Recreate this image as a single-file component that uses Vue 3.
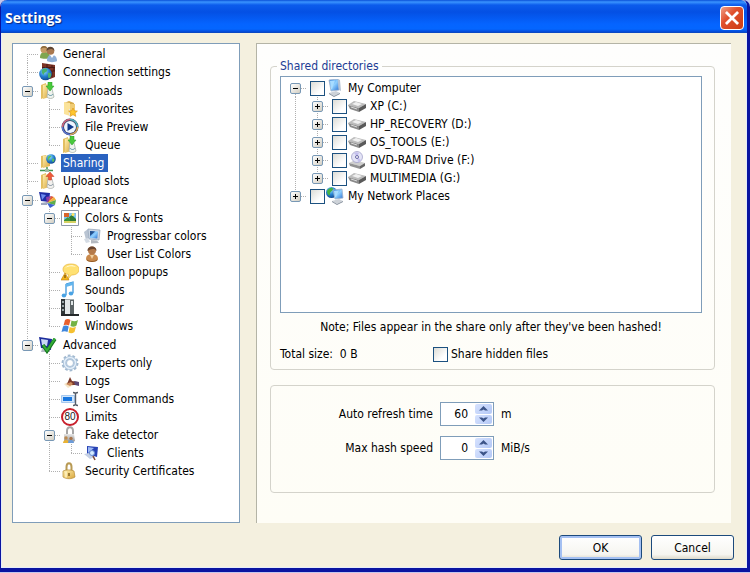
<template>
  <div class="window">
    <svg class="sprite" aria-hidden="true">
      <defs>
        <linearGradient id="gold" x1="0" y1="0" x2="1" y2="1">
          <stop offset="0" stop-color="#fff0b0" />
          <stop offset="1" stop-color="#d9a63c" />
        </linearGradient>
        <linearGradient id="screen" x1="0" y1="0" x2="1" y2="1">
          <stop offset="0" stop-color="#2f7fe0" />
          <stop offset="0.5" stop-color="#8fd0ff" />
          <stop offset="1" stop-color="#2a6fd0" />
        </linearGradient>
        <radialGradient id="globe" cx="0.4" cy="0.3" r="0.8">
          <stop offset="0" stop-color="#8fdcff" />
          <stop offset="0.5" stop-color="#2580d0" />
          <stop offset="1" stop-color="#0b3a80" />
        </radialGradient>
        <linearGradient id="metal" x1="0" y1="0" x2="0" y2="1">
          <stop offset="0" stop-color="#e8e8e8" />
          <stop offset="1" stop-color="#8c8c8c" />
        </linearGradient>
      </defs>

      <symbol id="users" viewBox="0 0 18 18">
        <path d="M1 13c0-5 2-6 5-6s5 2 5 6c-2 1-8 1-10 0z" fill="#7fa650" />
        <circle cx="5" cy="4.500" r="3.500" fill="#c79a63" />
        <path d="M1.500 4C2 0 8 0 8.500 4 6 2 4 3 1.500 4z" fill="#8a6a3c" />
        <path d="M8 16c0-5 2-6 5-6s5 2 5 6c-2 1.500-8 1.500-10 0z" fill="#8fb0d8" />
        <circle cx="11.500" cy="6" r="3.800" fill="#a9784f" />
        <path d="M7.500 6C7 1 15 0 15.500 6 13 3 10 4 7.500 6z" fill="#5d4634" />
        <path d="M11 10l2 3 2-3z" fill="#fff" />
      </symbol>
      <symbol id="connection" viewBox="0 0 18 18">
        <path d="M3 0l13 2v12l-5 2-8-3z" fill="#7c3325" />
        <path d="M3 4.500h13M4 8h12M8 1v3.500M13 2v3M10 5v3M15 5v3M13 8v6" stroke="#4a1a14" />
        <circle cx="6.500" cy="11" r="6.300" fill="url(#globe)" />
        <path d="M3 7c3-3 6-1 5 1s-3 1-3 3-3-1-2-4zM9 10c2-1 4 0 3 3s-3 3-3 0z" fill="#49b26d" />
      </symbol>
      <symbol id="folder-down" viewBox="0 0 18 18">
        <path d="M2 3l5-2v14l-5 2z" fill="#e3bf62" />
        <path d="M4 3l6-1v13l-6 2z" fill="url(#gold)" />
        <path d="M9 6l4 1 2 8c-2 2-5 2-7 0z" fill="#f0f3ee" stroke="#a8b2a8" stroke-width="0.800" />
        <path d="M9 0h4v4h2l-4 5-4-5h2z" fill="#48c93c" stroke="#249a22" stroke-width="0.500" />
        <path d="M9 12c1 2 4 2 5 0" fill="none" stroke="#5d94a4" />
      </symbol>
      <symbol id="folder-up" viewBox="0 0 18 18">
        <path d="M2 3l5-2v14l-5 2z" fill="#e3bf62" />
        <path d="M4 3l6-1v13l-6 2z" fill="url(#gold)" />
        <path d="M9 6l4 1 2 8c-2 2-5 2-7 0z" fill="#f3f1ee" stroke="#aab0ae" stroke-width="0.800" />
        <path d="M9.500 8h3V4.500H15L11 0 7 4.500h2.500z" fill="#ef5a3a" stroke="#c23a22" stroke-width="0.500" />
        <path d="M9 12c1 2 4 2 5 0" fill="none" stroke="#7d8fa0" />
      </symbol>
      <symbol id="favorites" viewBox="0 0 18 18">
        <path d="M3 3l5-2 5 2v11H3z" fill="#d7ab4b" />
        <path d="M3 2l6 1v13l-6-2z" fill="#fbe39a" />
        <path d="M9 4h5v11H9z" fill="#f0cc74" />
        <path d="M8 9h1v6H8z" fill="#e4e7e9" />
        <path d="M12 8l1.300 2.800 3.100.3-2.300 2.100.7 3.200-2.800-1.700-2.800 1.700.7-3.200-2.300-2.100 3.100-.3z" fill="#ffc62e" stroke="#d99012" stroke-width="0.600" />
      </symbol>
      <symbol id="preview" viewBox="0 0 18 18">
        <circle cx="9" cy="9" r="8.500" fill="#343c5e" />
        <path d="M9 1.500A7.500 7.500 0 0 1 16.500 9" fill="none" stroke="#56b4c0" stroke-width="1.500" />
        <path d="M16.500 9A7.500 7.500 0 0 1 9 16.500" fill="none" stroke="#e0ac5a" stroke-width="1.500" />
        <path d="M1.500 9A7.500 7.500 0 0 1 9 1.500" fill="none" stroke="#d06880" stroke-width="1.500" />
        <path d="M9 16.500A7.500 7.500 0 0 1 1.500 9" fill="none" stroke="#5b78d8" stroke-width="1.500" />
        <circle cx="9" cy="9" r="6" fill="#eef5ff" />
        <path d="M6.500 5l6.500 4-6.500 4z" fill="#123a8c" />
      </symbol>
      <symbol id="share" viewBox="0 0 18 18">
        <path d="M2 2l5-1v11l-5 2z" fill="#e3bf62" />
        <path d="M4 2l7-1v11l-7 2z" fill="url(#gold)" />
        <circle cx="12" cy="5" r="4.800" fill="url(#globe)" />
        <path d="M9 3c2-2 4-1 3 0s-2 1-2 3-2-1-1-3zM13 5c2-1 3 0 2 2s-2 1-2-2z" fill="#5cc05d" />
        <path d="M1 16.500h13M8 13v3" stroke="#3f9650" stroke-width="1.500" />
        <path d="M6 15h4v3H6z" fill="#9fb9a2" />
      </symbol>
      <symbol id="appearance" viewBox="0 0 18 18">
        <path d="M0 1l11 1-1 9-8-1z" fill="#1e2ca4" />
        <path d="M2 3l5 1-4 5z" fill="#6d8cf0" />
        <path d="M2 12l6-1v3H2z" fill="#a0a8c0" />
        <path d="M8 12l4-7 3 1z" fill="#e05a34" />
        <path d="M8 12l7-6 2 3z" fill="#f2b23c" />
        <path d="M8 12l9-3-1 5z" fill="#5fae4b" />
        <path d="M8 12l8 2-5 3z" fill="#3c62d2" />
        <path d="M8 12L7 6l5-1z" fill="#8c3ca8" />
      </symbol>
      <symbol id="picture" viewBox="0 0 18 18">
        <path d="M.5 1.500h17v15H.5z" fill="#fff" stroke="#8e98a8" />
        <path d="M3 4h12v10H3z" fill="#7cc2f4" />
        <path d="M3 11l4-3 3 4 5-1v3H3z" fill="#3d9438" />
        <path d="M3 4h5v4H3z" fill="#d8642c" />
        <path d="M8 8l3-2 4 4v2H9z" fill="#2e7a34" />
        <circle cx="12" cy="5.500" r="1.500" fill="#ffe35c" />
        <path d="M3 12h12v2H3z" fill="#d6d264" />
      </symbol>
      <symbol id="monitor" viewBox="0 0 18 18">
        <path d="M1 5l4-3 1 9-3 2z" fill="#b9c4d2" />
        <path d="M5 2l12 1-1 10-10-1z" fill="#cbd6e4" stroke="#8fa0b6" stroke-width="0.700" />
        <path d="M7 4l8 .6-.7 7L7 11z" fill="url(#screen)" />
        <path d="M7 4l5 .4L7 9z" fill="#24508c" />
        <path d="M8 13l6 .5 2 2.500-8 .5z" fill="#b4b9c0" />
        <path d="M1 12l4-1 2 4-4 1z" fill="#d4dbe4" />
      </symbol>
      <symbol id="person" viewBox="0 0 18 18">
        <path d="M3 14c0-4 3-5 6-5s6 1 6 5c0 4-12 4-12 0z" fill="#c98a4c" />
        <path d="M7 10l2 4 2-4z" fill="#f0d0a0" />
        <circle cx="9" cy="5.500" r="4" fill="#b47a4a" />
        <path d="M4.500 6C4 0 14 0 13.500 6 12 3 8 3.500 4.500 6z" fill="#6a4630" />
        <path d="M4 15c3 2 7 2 10 0" fill="none" stroke="#935b26" />
      </symbol>
      <symbol id="balloon" viewBox="0 0 18 18">
        <path d="M10 1c5 0 8 2 8 5.500S15 12 10.500 12L7 16l.500-4.500C4 11 2 9 2 6.500 2 3 5 1 10 1z" fill="#ffe173" stroke="#e7b53e" stroke-width="0.700" />
        <path d="M4 5c2-3 8-4 11-1-3-1-8-1-11 1z" fill="#fffbe0" />
        <path d="M4 10l4 7H0z" fill="#f5b71d" stroke="#bd7c10" stroke-width="0.600" />
        <path d="M4 12v3" stroke="#5b3b05" />
      </symbol>
      <symbol id="note" viewBox="0 0 18 18">
        <path d="M5 3l7-2v11M5 3v11" fill="none" stroke="#3b96dc" stroke-width="1.300" />
        <path d="M5 3l7-2v3L5 6z" fill="#61b5ee" />
        <ellipse cx="3" cy="14.500" rx="2.300" ry="2" fill="#4aa3e4" />
        <ellipse cx="10" cy="12.500" rx="2.300" ry="2" fill="#4aa3e4" />
      </symbol>
      <symbol id="toolbar" viewBox="0 0 18 18">
        <path d="M0 0h13v16H0z" fill="#a3abad" />
        <path d="M0 0h4v16H0z" fill="#303638" />
        <path d="M1 2h2v2H1zM1 6h2v2H1zM1 10h2v2H1z" fill="#9aa6a8" />
        <path d="M4 1h5v14H4z" fill="#e4e9ea" />
        <path d="M9 1h4v14H9z" fill="#5b6365" />
        <path d="M10 2h2v4h-2z" fill="#dfe5e6" />
        <path d="M0 15h18v2H0z" fill="#25292b" />
      </symbol>
      <symbol id="flag" viewBox="0 0 18 18">
        <path d="M4 3c2-1.500 4-1 5.500 0L8 8.500C6 7.500 4 7.500 2.500 8.500z" fill="#e8602c" />
        <path d="M10.500 3.500c2 1 4 1 6.500-.5l-1.500 5.500c-2 1.500-4 1.500-6 .5z" fill="#73b344" />
        <path d="M2 9.500c2-1.500 4-1 5.700 0L6.500 15C4.500 14 2.500 14 .5 15z" fill="#3f86dc" />
        <path d="M8.700 10c2 1 4 1 6.300-.5L13.500 15c-2 1.500-4 1.500-6 .5z" fill="#f5c030" />
      </symbol>
      <symbol id="advanced" viewBox="0 0 18 18">
        <path d="M0 1l13 2-1 11-10-2z" fill="#1c2c9c" />
        <path d="M2 3l7 1-1 6-5-1z" fill="#c9d8f4" />
        <path d="M3 13l8 1v2H2z" fill="#b5bac6" />
        <path d="M4 9l4 6 8-12" fill="none" stroke="#14751c" stroke-width="3.500" />
        <path d="M4 9l4 5.500 8-12" fill="none" stroke="#35ad38" stroke-width="2" />
      </symbol>
      <symbol id="gear" viewBox="0 0 18 18">
        <circle cx="9" cy="9" r="7.500" fill="none" stroke="#a2b9cf" stroke-width="2" stroke-dasharray="2.700 2" />
        <circle cx="9" cy="9" r="5.300" fill="none" stroke="#a9c1da" stroke-width="3.500" />
        <circle cx="9" cy="9" r="5.500" fill="none" stroke="#e3eef8" stroke-width="1.500" />
        <circle cx="9" cy="9" r="3.500" fill="#fff" stroke="#8eabc8" stroke-width="0.700" />
      </symbol>
      <symbol id="log" viewBox="0 0 18 18">
        <path d="M3 12l6-3 4 4-6 3z" fill="#f5e6c8" />
        <path d="M9 5l2 4 6 1v3l-7 0-4-1z" fill="#7c3b2c" />
        <path d="M13 9l5 1v4l-4-1z" fill="#5c4a76" />
        <path d="M5 12l5-2 2 2-3 2z" fill="#cf8c5c" />
      </symbol>
      <symbol id="textfield" viewBox="0 0 18 18">
        <path d="M.5 5.500h13v7H.5z" fill="#cfe5fb" stroke="#a6c8ee" />
        <path d="M2 7h9v4H2z" fill="#1877e0" />
        <path d="M12 2.500c1.500 0 2 .5 2.500 1 .5-.5 1-1 2.500-1M14.500 3.500v11M12 15.500c1.500 0 2-.5 2.500-1 .5.5 1 1 2.500 1" fill="none" stroke="#555d68" stroke-width="1.400" />
      </symbol>
      <symbol id="lock-fake" viewBox="0 0 18 18">
        <path d="M6 9V5c0-5 6-5 6 0v4" fill="none" stroke="#a6a6a6" stroke-width="2" />
        <path d="M3 8h10l1 7c-3 2-8 2-11 1z" fill="url(#metal)" />
        <circle cx="5" cy="12" r="1.700" fill="#be8b50" />
        <path d="M2 17c0-4 6-4 6 0z" fill="#e9b234" />
        <circle cx="10" cy="12.500" r="1.700" fill="#a9744a" />
        <path d="M7 17c0-4 6-4 6 0z" fill="#6c9bd8" />
      </symbol>
      <symbol id="client" viewBox="0 0 18 18">
        <path d="M4 2l11 1-1 10-10-3z" fill="#2742b4" />
        <path d="M5 3l6 1-6 5z" fill="#9db9f4" />
        <path d="M1 10l5-1 6 4-5 2z" fill="#c5d0e4" />
        <circle cx="9" cy="9" r="2.500" fill="#d6ecff" stroke="#6b8fd2" />
        <path d="M10 12l2 4" stroke="#7d4b38" stroke-width="1.500" />
      </symbol>
      <symbol id="lock" viewBox="0 0 18 18">
        <path d="M5.500 9V5c0-5 5-5 5 0v4" fill="none" stroke="#b89a54" stroke-width="2" />
        <path d="M2 9c3-1.500 8-1.500 11 0l1 6c-3 2-8 2.500-12 0z" fill="url(#gold)" stroke="#b58a32" stroke-width="0.700" />
        <path d="M5 9.500v6" stroke="#fff3c4" stroke-width="1.500" />
        <path d="M8 11v3" stroke="#80601c" stroke-width="1.500" />
      </symbol>
      <symbol id="computer" viewBox="0 0 18 18">
        <path d="M3 1l9-1 1 11-8 1z" fill="url(#screen)" stroke="#9fb2cc" stroke-width="0.800" />
        <path d="M12 0l2 1 1 11-2-1z" fill="#b4c2d4" />
        <path d="M4 2l5-.5L6 10H5z" fill="#a8dcff" />
        <path d="M3 14l7-2 4 2-6 3z" fill="#cdd2d8" />
        <path d="M3 14l5 3 6-3v1l-6 3-5-3z" fill="#858f9c" />
      </symbol>
      <symbol id="drive" viewBox="0 0 18 18">
        <path d="M0 8l6-4 12 3-7 4z" fill="#bcbcbc" />
        <path d="M0 8l11 3v4L2 12z" fill="#8a8a8a" />
        <path d="M11 11l7-4v4l-7 4z" fill="#5a5a5a" />
        <path d="M4 7l4-2 6 2-4 2z" fill="#f0f0f0" />
        <path d="M3 10l6 2" stroke="#d8d8d8" />
      </symbol>
      <symbol id="dvd" viewBox="0 0 18 18">
        <path d="M1 12l6-3 10 3-5 3z" fill="#cfcfcf" />
        <path d="M1 12l11 3v3L2 15z" fill="#929292" />
        <path d="M12 15l5-3v3l-5 3z" fill="#666" />
        <circle cx="9" cy="6" r="5.500" fill="#e4e4f6" stroke="#9a98c4" stroke-width="0.700" />
        <path d="M9 6L6 2c2-1 3-1 5 0zM9 6l4 3c-1 1-2 2-3 2z" fill="#c4c0ee" />
        <circle cx="9" cy="6" r="1.500" fill="#fff" stroke="#6c6aa8" />
      </symbol>
      <symbol id="network" viewBox="0 0 18 18">
        <circle cx="5.500" cy="5.500" r="5.500" fill="url(#globe)" />
        <path d="M1 4c2-4 6-4 6-2S4 4 4 7 1 8 1 4z" fill="#45b345" />
        <path d="M7 3l9-1 1 9-8 1z" fill="url(#screen)" stroke="#9fb2cc" stroke-width="0.800" />
        <path d="M8 4l5-.5L10 10H9z" fill="#a8dcff" />
        <path d="M6 14l7-2 4 2-6 3z" fill="#cdd2d8" />
        <path d="M6 14l5 3 6-3v1l-6 3-5-3z" fill="#858f9c" />
      </symbol>
    </svg>

    <header class="titlebar">
      <h1>Settings</h1>
      <button type="button" class="close" aria-label="Close">
        <svg viewBox="0 0 20 20"><path d="M4.500 4.500l11 11M15.500 4.500l-11 11" /></svg>
      </button>
    </header>

    <form class="content" @submit.prevent>
      <div class="panes">
        <nav class="tree" aria-label="Settings pages">
          <div
            v-for="row in pageRows"
            :key="row.label"
            class="row"
            :class="{ branch: row.depth === 0 && row.parent }"
          >
            <span
              v-for="(on, i) in row.guides"
              :key="i"
              class="guide"
              :class="{ line: on }"
            ></span>
            <span class="guide elbow" :class="{ first: row.first, last: row.last }">
              <button
                v-if="row.parent"
                type="button"
                class="expander"
                :class="{ plus: closed.includes(row.label) }"
                :aria-label="'Toggle ' + row.label"
                @click="toggle(row.label)"
              ></button>
            </span>
            <span v-if="row.icon === 'limit'" class="icon sign">80</span>
            <svg v-else class="icon"><use :href="'#' + row.icon" /></svg>
            <a
              href="#"
              class="label"
              :class="{ selected: row.label === page }"
              @click.prevent="page = row.label"
              >{{ row.label }}</a
            >
          </div>
        </nav>

        <main class="page">
          <fieldset class="group shared">
            <legend>Shared directories</legend>
            <div class="tree directories">
              <div v-for="row in directoryRows" :key="row.label" class="row">
                <span
                  v-for="(on, i) in row.guides"
                  :key="i"
                  class="guide"
                  :class="{ line: on }"
                ></span>
                <span class="guide elbow" :class="{ first: row.first, last: row.last }">
                  <button
                    type="button"
                    class="expander"
                    :class="{ plus: !row.parent || closed.includes(row.label) }"
                    :aria-label="'Toggle ' + row.label"
                    @click="toggle(row.label)"
                  ></button>
                </span>
                <label class="directory">
                  <input v-model="shared" type="checkbox" :value="row.label" />
                  <svg class="icon"><use :href="'#' + row.icon" /></svg>
                  <span>{{ row.label }}</span>
                </label>
              </div>
            </div>
            <p class="note">Note; Files appear in the share only after they've been hashed!</p>
            <div class="summary">
              <span>Total size:&nbsp; 0 B</span>
              <label class="hidden-files">
                <input v-model="shareHidden" type="checkbox" />
                <span>Share hidden files</span>
              </label>
            </div>
          </fieldset>

          <section class="group limits">
            <template v-for="field in fields" :key="field.id">
              <label :for="field.id">{{ field.label }}</label>
              <div class="spinner">
                <input :id="field.id" v-model.number="field.value" type="text" />
                <div class="arrows">
                  <button type="button" aria-label="Increase" @click="field.value++">
                    <svg viewBox="0 0 9 5"><path d="M4.500 0L9 4.500H6l-1.500-1L3 4.500H0z" /></svg>
                  </button>
                  <button
                    type="button"
                    aria-label="Decrease"
                    @click="field.value = Math.max(0, field.value - 1)"
                  >
                    <svg viewBox="0 0 9 5"><path d="M4.500 5L0 .5h3l1.500 1L6 .5h3z" /></svg>
                  </button>
                </div>
              </div>
              <span>{{ field.unit }}</span>
            </template>
          </section>
        </main>
      </div>

      <footer class="actions">
        <button type="submit" class="btn default">OK</button>
        <button type="button" class="btn">Cancel</button>
      </footer>
    </form>
  </div>
</template>

<script setup>
import { computed, reactive, ref } from "vue";

const page = ref("Sharing");
const closed = ref([]);
const shared = ref([]);
const shareHidden = ref(false);

const fields = reactive([
  { id: "refresh", label: "Auto refresh time", value: 60, unit: "m" },
  { id: "hash", label: "Max hash speed", value: 0, unit: "MiB/s" },
]);

const pages = [
  { label: "General", icon: "users" },
  { label: "Connection settings", icon: "connection" },
  {
    label: "Downloads",
    icon: "folder-down",
    children: [
      { label: "Favorites", icon: "favorites" },
      { label: "File Preview", icon: "preview" },
      { label: "Queue", icon: "folder-down" },
    ],
  },
  { label: "Sharing", icon: "share" },
  { label: "Upload slots", icon: "folder-up" },
  {
    label: "Appearance",
    icon: "appearance",
    children: [
      {
        label: "Colors & Fonts",
        icon: "picture",
        children: [
          { label: "Progressbar colors", icon: "monitor" },
          { label: "User List Colors", icon: "person" },
        ],
      },
      { label: "Balloon popups", icon: "balloon" },
      { label: "Sounds", icon: "note" },
      { label: "Toolbar", icon: "toolbar" },
      { label: "Windows", icon: "flag" },
    ],
  },
  {
    label: "Advanced",
    icon: "advanced",
    children: [
      { label: "Experts only", icon: "gear" },
      { label: "Logs", icon: "log" },
      { label: "User Commands", icon: "textfield" },
      { label: "Limits", icon: "limit" },
      {
        label: "Fake detector",
        icon: "lock-fake",
        children: [{ label: "Clients", icon: "client" }],
      },
      { label: "Security Certificates", icon: "lock" },
    ],
  },
];

const directories = [
  {
    label: "My Computer",
    icon: "computer",
    children: [
      { label: "XP (C:)", icon: "drive" },
      { label: "HP_RECOVERY (D:)", icon: "drive" },
      { label: "OS_TOOLS (E:)", icon: "drive" },
      { label: "DVD-RAM Drive (F:)", icon: "dvd" },
      { label: "MULTIMEDIA (G:)", icon: "drive" },
    ],
  },
  { label: "My Network Places", icon: "network" },
];

// guides holds one flag per ancestor: true when its line runs on below
function flatten(nodes, guides = []) {
  return nodes.flatMap((node, i) => {
    const last = i === nodes.length - 1;
    const row = {
      label: node.label,
      icon: node.icon,
      depth: guides.length,
      parent: !!node.children,
      first: i === 0 && guides.length === 0,
      last,
      guides,
    };
    if (!node.children || closed.value.includes(node.label)) return [row];
    return [row, ...flatten(node.children, [...guides, !last])];
  });
}

const pageRows = computed(() => flatten(pages));
const directoryRows = computed(() => flatten(directories));

function toggle(label) {
  const i = closed.value.indexOf(label);
  if (i < 0) closed.value.push(label);
  else closed.value.splice(i, 1);
}
</script>

<style>
body {
  margin: 0;
  background: #c4c6ec;
}
</style>

<style scoped>
.window {
  display: flex;
  flex-direction: column;
  box-sizing: border-box;
  min-height: calc(100vh - 1px);
  border: solid #0a14a0;
  border-width: 0 3px 4px 1px;
  border-radius: 7px 7px 0 0;
  background: #f4f0df;
  color: #000;
  font-family: "DejaVu Sans Condensed", "DejaVu Sans", Tahoma, sans-serif;
  font-size: 12px;
  line-height: 16px;
}

.sprite {
  position: absolute;
  width: 0;
  height: 0;
}

.titlebar {
  display: flex;
  align-items: center;
  justify-content: space-between;
  box-sizing: border-box;
  height: 33px;
  padding: 3px 3px 0 4px;
  border-bottom: 1px solid #0a48c4;
  border-radius: 6px 6px 0 0;
  background: linear-gradient(#0a50d8, #3a94ff 2px, #0c5cec 5px, #0450e4 12px, #0564ff 24px, #0466ff 29px, #0448d4);
}

.titlebar h1 {
  margin: 0;
  color: #fff;
  font-family: "Open Sans", "Noto Sans", sans-serif;
  font-size: 14px;
  font-weight: 700;
  line-height: 20px;
  text-shadow: 1px 1px 1px #0a2a80;
}

.close {
  width: 24px;
  height: 24px;
  padding: 0;
  border: 1px solid #fff;
  border-radius: 4px;
  background: linear-gradient(135deg, #f0a088, #e0502c 40%, #cc3c14);
}

.close svg {
  display: block;
  width: 22px;
  height: 22px;
}

.close path {
  fill: none;
  stroke: #fff;
  stroke-width: 2.5;
}

.content {
  display: flex;
  flex: 1;
  flex-direction: column;
  gap: 12px;
  padding: 10px 12px 7px 10px;
  border: solid #e4ecfa;
  border-width: 0 1px 1px;
}

.panes {
  display: flex;
  flex: 1;
  gap: 16px;
  padding-right: 3px;
}

.tree {
  box-sizing: border-box;
  flex: 0 0 228px;
  padding: 1px 4px;
  border: 1px solid #7f9db9;
  background: #fff;
}

.row {
  display: flex;
  align-items: stretch;
  height: 18px;
  line-height: 18px;
  white-space: nowrap;
}

.branch {
  padding-top: 1px;
}

.guide {
  display: flex;
  align-items: center;
  flex: 0 0 22px;
}

/* dotted connectors, drawn as background strips */
.line {
  background: repeating-linear-gradient(#b0b0b0 0 1px, transparent 1px 2px) 10px 0 / 1px 100% no-repeat;
}

.elbow {
  background:
    repeating-linear-gradient(#b0b0b0 0 1px, transparent 1px 2px) 10px 0 / 1px 100% no-repeat,
    repeating-linear-gradient(90deg, #b0b0b0 0 1px, transparent 1px 2px) 10px 9px / 11px 1px no-repeat;
}

.elbow.first {
  background-position: 10px 9px, 10px 9px;
}

.elbow.last {
  background-size: 1px 50%, 11px 1px;
}

.expander {
  width: 11px;
  height: 11px;
  margin-left: 5px;
  padding: 0;
  border: 1px solid #7898b5;
  border-radius: 2px;
  background:
    linear-gradient(#000, #000) 2px 4px / 5px 1px no-repeat,
    linear-gradient(135deg, #fff, #d2cec2);
}

.expander.plus {
  background:
    linear-gradient(#000, #000) 2px 4px / 5px 1px no-repeat,
    linear-gradient(#000, #000) 4px 2px / 1px 5px no-repeat,
    linear-gradient(135deg, #fff, #d2cec2);
}

.icon {
  flex: none;
  width: 18px;
  height: 18px;
  margin-right: 4px;
}

.sign {
  box-sizing: border-box;
  border: 2px solid #c8202c;
  border-radius: 50%;
  color: #222;
  font-family: "Liberation Sans", sans-serif;
  font-size: 10px;
  line-height: 14px;
  text-align: center;
}

.label {
  padding: 0 4px 0 2px;
  color: inherit;
  text-decoration: none;
}

.selected {
  background: #2a62c0;
  color: #fff;
}

.page {
  display: flex;
  flex: 1;
  flex-direction: column;
  gap: 15px;
  padding: 14px 16px 30px 13px;
  border-top: 1px solid #b4b4a6;
  border-left: 1px solid #b4b4a6;
  background: linear-gradient(#fefefd, #fefdf6);
}

.group {
  min-width: 0;
  margin: 0;
  border: 1px solid #d4d3cb;
  border-radius: 4px;
}

.shared {
  display: flex;
  flex: 1;
  flex-direction: column;
  padding: 2px 12px 7px 9px;
}

.shared legend {
  margin-left: -3px;
  padding: 0 3px;
  color: #1c3c94;
}

.directories {
  flex: 1;
  padding: 2px 4px;
}

.directory {
  display: flex;
  align-items: center;
}

.directory input {
  margin: 0 1px 0 3px;
}

input[type="checkbox"] {
  appearance: none;
  flex: none;
  box-sizing: border-box;
  width: 15px;
  height: 15px;
  border: 1px solid #1c5180;
  background: linear-gradient(135deg, #dcdcd6, #fff 70%);
}

input[type="checkbox"]:checked {
  background: #21a121;
  box-shadow: inset 0 0 0 3px #fff;
}

.note {
  margin: 6px 0 11px;
  text-align: center;
}

.summary {
  display: grid;
  grid-template-columns: 153px 1fr;
}

.hidden-files {
  display: flex;
  align-items: center;
  gap: 3px;
}

.hidden-files input {
  margin: 0;
}

.limits {
  display: grid;
  grid-template-columns: 153px 54px 1fr;
  align-items: center;
  gap: 10px 7px;
  padding: 16px 9px 32px;
}

.limits label {
  text-align: right;
}

.spinner {
  display: flex;
  box-sizing: border-box;
  height: 24px;
  padding: 1px;
  border: 1px solid #7f9db9;
  background: #fff;
}

.spinner input {
  flex: 1;
  min-width: 0;
  padding: 0 7px 0 0;
  border: 0;
  background: none;
  font: inherit;
  text-align: right;
  outline: 0;
}

.arrows {
  display: flex;
  flex: 0 0 17px;
  flex-direction: column;
  gap: 1px;
}

.arrows button {
  display: flex;
  flex: 1;
  align-items: center;
  justify-content: center;
  padding: 0;
  border: 0;
  border-radius: 2px;
  background: linear-gradient(135deg, #d6e2fe, #b4c8f6);
}

.arrows svg {
  width: 9px;
  height: 5px;
  fill: #3c5488;
}

.actions {
  display: flex;
  justify-content: flex-end;
  gap: 9px;
}

.btn {
  width: 83px;
  height: 25px;
  padding: 0;
  border: 1px solid #1c4a7c;
  border-radius: 3px;
  background: linear-gradient(#fff, #f6f5f0 80%, #dedacb);
  color: #000;
  font: inherit;
}

.btn.default {
  box-shadow: inset 0 0 0 2px #a4c0f2;
}
</style>
